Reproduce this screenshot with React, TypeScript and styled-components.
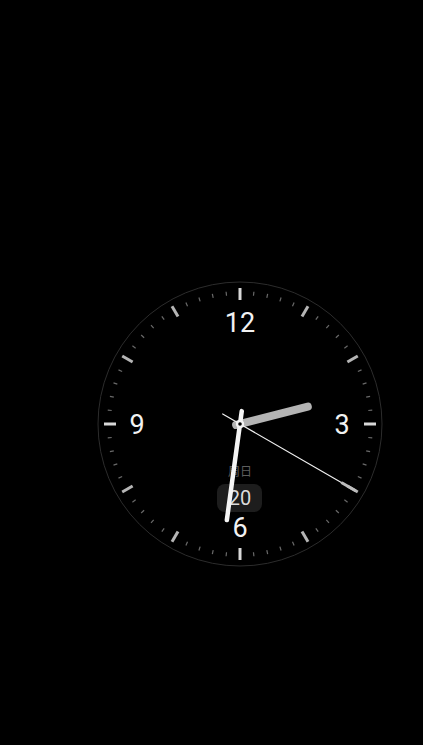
import React from "react";
import styled, { createGlobalStyle } from "styled-components";

const GlobalStyle = createGlobalStyle`
  html, body {
    margin: 0;
    padding: 0;
    background: #000;
  }
  body {
    font-family: Roboto, "Noto Sans", "Noto Sans CJK SC", sans-serif;
  }
`;

const Screen = styled.div`
  width: 423px;
  height: 745px;
  background: #000;
  display: flex;
  align-items: flex-start;
  padding: 279px 0 0 95px;
  box-sizing: border-box;
  overflow: hidden;
`;

const Face = styled.svg`
  width: 290px;
  height: 290px;
  display: block;
`;

const Numeral = styled.text`
  fill: #f2f2f2;
  font-family: Roboto, "Noto Sans", sans-serif;
  font-size: 27px;
  font-weight: 400;
`;

const DayLabel = styled.text`
  fill: #5e5e5e;
  font-family: "Noto Sans CJK SC", "Noto Sans", sans-serif;
  font-size: 12px;
`;

const DateText = styled.text`
  fill: #dcdcdc;
  font-family: Roboto, "Noto Sans", sans-serif;
  font-size: 20px;
`;

const C = 145;

function polar(angleDeg: number, r: number) {
  const a = ((angleDeg - 90) * Math.PI) / 180;
  return { x: C + r * Math.cos(a), y: C + r * Math.sin(a) };
}

function Ticks(): React.ReactElement {
  const ticks = [];
  for (let i = 0; i < 60; i++) {
    const angle = i * 6;
    const hour = i % 5 === 0;
    const major = i % 15 === 0;
    const p1 = polar(angle, hour ? 136 : 133);
    const p2 = polar(angle, hour ? 124 : 129);
    ticks.push(
      <line
        key={i}
        x1={p1.x}
        y1={p1.y}
        x2={p2.x}
        y2={p2.y}
        stroke={major ? "#d8d8d8" : hour ? "#b5b5b5" : "#6a6a6a"}
        strokeWidth={hour ? 3 : 1.2}
      />
    );
  }
  return <g>{ticks}</g>;
}

function Hand(props: {
  angle: number;
  length: number;
  tail: number;
  width: number;
  color: string;
}): React.ReactElement {
  const { angle, length, tail, width, color } = props;
  const tip = polar(angle, length);
  const back = polar(angle + 180, tail);
  return (
    <line
      x1={back.x}
      y1={back.y}
      x2={tip.x}
      y2={tip.y}
      stroke={color}
      strokeWidth={width}
      strokeLinecap="round"
    />
  );
}

export default function App(): React.ReactElement {
  const hours = 2;
  const minutes = 31.3;
  const seconds = 20;
  const hourAngle = (hours + minutes / 60) * 30;
  const minuteAngle = minutes * 6;
  const secondAngle = seconds * 6;
  const secTip = polar(secondAngle, 133);
  const secMid = polar(secondAngle, 118);

  return (
    <>
      <GlobalStyle />
      <Screen>
        <Face viewBox="0 0 290 290">
          <circle cx={C} cy={C} r={142} fill="#000" stroke="#2c2c2c" strokeWidth={1} />
          <Ticks />
          <Numeral x={C} y={53} textAnchor="middle">12</Numeral>
          <Numeral x={247} y={155} textAnchor="middle">3</Numeral>
          <Numeral x={C} y={258} textAnchor="middle">6</Numeral>
          <Numeral x={42} y={155} textAnchor="middle">9</Numeral>
          <DayLabel x={C} y={197} textAnchor="middle">周日</DayLabel>
          <rect x={122} y={205} width={45} height={28} rx={8} fill="#1d1d1d" />
          <DateText x={C} y={226} textAnchor="middle">20</DateText>
          <Hand angle={hourAngle} length={70} tail={4} width={8} color="#b4b4b4" />
          <Hand angle={minuteAngle} length={97} tail={13} width={4.5} color="#f4f4f4" />
          <Hand angle={secondAngle} length={133} tail={20} width={1.2} color="#f0f0f0" />
          <line
            x1={secMid.x}
            y1={secMid.y}
            x2={secTip.x}
            y2={secTip.y}
            stroke="#bdbdbd"
            strokeWidth={3}
            strokeLinecap="round"
          />
          <circle cx={C} cy={C} r={4.2} fill="#f4f4f4" />
          <circle cx={C} cy={C} r={1.8} fill="#000" />
        </Face>
      </Screen>
    </>
  );
}
